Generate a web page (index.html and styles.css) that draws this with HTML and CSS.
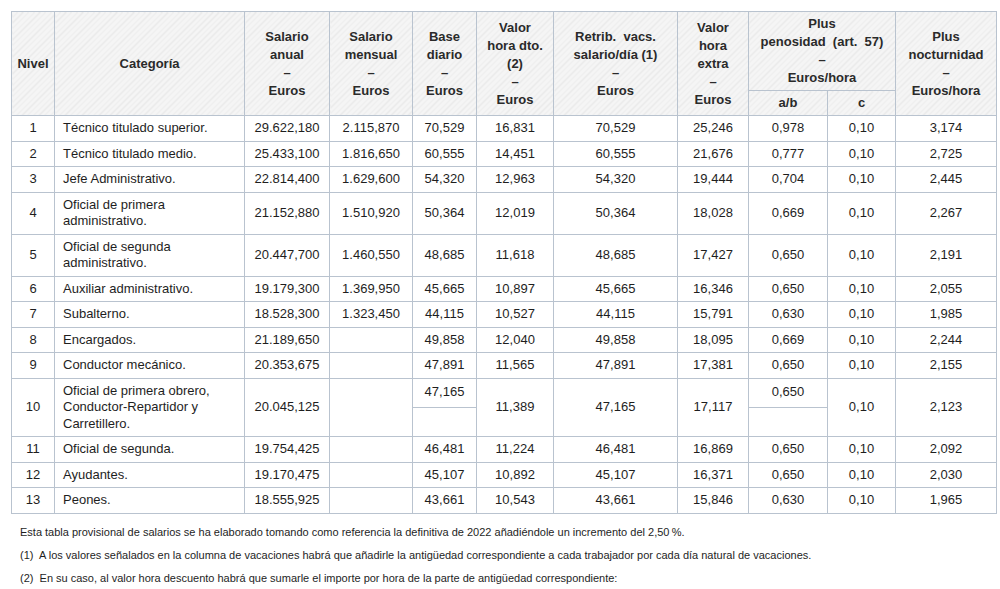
FILE: index.html
```html
<!DOCTYPE html>
<html lang="es">
<head>
<meta charset="utf-8">
<title>Tabla salarial</title>
<link rel="stylesheet" href="styles.css">
</head>
<body>
<div class="page">
<table class="salarios">
  <colgroup>
    <col class="c-nivel"><col class="c-cat"><col class="c-anual"><col class="c-mensual"><col class="c-base"><col class="c-dto"><col class="c-retrib"><col class="c-extra"><col class="c-ab"><col class="c-c"><col class="c-noct">
  </colgroup>
  <thead>
    <tr>
      <th rowspan="2">Nivel</th>
      <th rowspan="2">Categoría</th>
      <th rowspan="2">Salario<br>anual<br>–<br>Euros</th>
      <th rowspan="2">Salario<br>mensual<br>–<br>Euros</th>
      <th rowspan="2">Base<br>diario<br>–<br>Euros</th>
      <th rowspan="2">Valor<br>hora dto.<br>(2)<br>–<br>Euros</th>
      <th rowspan="2">Retrib.&nbsp; vacs.<br>salario/día (1)<br>–<br>Euros</th>
      <th rowspan="2">Valor<br>hora<br>extra<br>–<br>Euros</th>
      <th colspan="2">Plus<br>penosidad&nbsp; (art.&nbsp; 57)<br>–<br>Euros/hora</th>
      <th rowspan="2">Plus<br>nocturnidad<br>–<br>Euros/hora</th>
    </tr>
    <tr>
      <th>a/b</th>
      <th>c</th>
    </tr>
  </thead>
  <tbody>
    <tr><td>1</td><td class="cat">Técnico titulado superior.</td><td>29.622,180</td><td>2.115,870</td><td>70,529</td><td>16,831</td><td>70,529</td><td>25,246</td><td>0,978</td><td>0,10</td><td>3,174</td></tr>
    <tr><td>2</td><td class="cat">Técnico titulado medio.</td><td>25.433,100</td><td>1.816,650</td><td>60,555</td><td>14,451</td><td>60,555</td><td>21,676</td><td>0,777</td><td>0,10</td><td>2,725</td></tr>
    <tr><td>3</td><td class="cat">Jefe Administrativo.</td><td>22.814,400</td><td>1.629,600</td><td>54,320</td><td>12,963</td><td>54,320</td><td>19,444</td><td>0,704</td><td>0,10</td><td>2,445</td></tr>
    <tr><td>4</td><td class="cat">Oficial de primera<br>administrativo.</td><td>21.152,880</td><td>1.510,920</td><td>50,364</td><td>12,019</td><td>50,364</td><td>18,028</td><td>0,669</td><td>0,10</td><td>2,267</td></tr>
    <tr><td>5</td><td class="cat">Oficial de segunda<br>administrativo.</td><td>20.447,700</td><td>1.460,550</td><td>48,685</td><td>11,618</td><td>48,685</td><td>17,427</td><td>0,650</td><td>0,10</td><td>2,191</td></tr>
    <tr><td>6</td><td class="cat">Auxiliar administrativo.</td><td>19.179,300</td><td>1.369,950</td><td>45,665</td><td>10,897</td><td>45,665</td><td>16,346</td><td>0,650</td><td>0,10</td><td>2,055</td></tr>
    <tr><td>7</td><td class="cat">Subalterno.</td><td>18.528,300</td><td>1.323,450</td><td>44,115</td><td>10,527</td><td>44,115</td><td>15,791</td><td>0,630</td><td>0,10</td><td>1,985</td></tr>
    <tr><td>8</td><td class="cat">Encargados.</td><td>21.189,650</td><td></td><td>49,858</td><td>12,040</td><td>49,858</td><td>18,095</td><td>0,669</td><td>0,10</td><td>2,244</td></tr>
    <tr><td>9</td><td class="cat">Conductor mecánico.</td><td>20.353,675</td><td></td><td>47,891</td><td>11,565</td><td>47,891</td><td>17,381</td><td>0,650</td><td>0,10</td><td>2,155</td></tr>
    <tr class="split-a"><td rowspan="2">10</td><td rowspan="2" class="cat">Oficial de primera obrero,<br>Conductor-Repartidor y<br>Carretillero.</td><td rowspan="2">20.045,125</td><td rowspan="2"></td><td>47,165</td><td rowspan="2">11,389</td><td rowspan="2">47,165</td><td rowspan="2">17,117</td><td>0,650</td><td rowspan="2">0,10</td><td rowspan="2">2,123</td></tr>
    <tr class="split-b"><td></td><td></td></tr>
    <tr><td>11</td><td class="cat">Oficial de segunda.</td><td>19.754,425</td><td></td><td>46,481</td><td>11,224</td><td>46,481</td><td>16,869</td><td>0,650</td><td>0,10</td><td>2,092</td></tr>
    <tr><td>12</td><td class="cat">Ayudantes.</td><td>19.170,475</td><td></td><td>45,107</td><td>10,892</td><td>45,107</td><td>16,371</td><td>0,650</td><td>0,10</td><td>2,030</td></tr>
    <tr><td>13</td><td class="cat">Peones.</td><td>18.555,925</td><td></td><td>43,661</td><td>10,543</td><td>43,661</td><td>15,846</td><td>0,630</td><td>0,10</td><td>1,965</td></tr>
  </tbody>
</table>
<div class="notes">
  <p>Esta tabla provisional de salarios se ha elaborado tomando como referencia la definitiva de 2022 añadiéndole un incremento del 2,50&#8201;%.</p>
  <p>(1)&nbsp; A los valores señalados en la columna de vacaciones habrá que añadirle la antigüedad correspondiente a cada trabajador por cada día natural de vacaciones.</p>
  <p>(2)&nbsp; En su caso, al valor hora descuento habrá que sumarle el importe por hora de la parte de antigüedad correspondiente:</p>
</div>
</div>
</body>
</html>
```

FILE: styles.css
```css
html, body {
  margin: 0;
  padding: 0;
  background: #ffffff;
}

body {
  font-family: "Liberation Sans", Arial, sans-serif;
  color: #1e1e1e;
}

.page {
  padding: 11px 4px 0 11px;
}

.salarios {
  border-collapse: collapse;
  table-layout: fixed;
  width: 985px;
  font-size: 13px;
}

.c-nivel { width: 43px; }
.c-cat { width: 190px; }
.c-anual { width: 85px; }
.c-mensual { width: 83px; }
.c-base { width: 64px; }
.c-dto { width: 77px; }
.c-retrib { width: 124px; }
.c-extra { width: 71px; }
.c-ab { width: 79px; }
.c-c { width: 68px; }
.c-noct { width: 101px; }

.salarios th,
.salarios td {
  border: 1px solid #b9c3cf;
  text-align: center;
  vertical-align: middle;
}

.salarios th {
  font-weight: bold;
  color: #2a2a2a;
  line-height: 18px;
  padding: 3px 4px;
  background-color: #f4f4f4;
  background-image: repeating-linear-gradient(135deg, #f5f5f5 0px, #f5f5f5 3px, #e9e9e9 3px, #e9e9e9 4px);
}

.salarios td {
  line-height: 16.5px;
  padding: 4px 4px;
}

.salarios td.cat {
  text-align: left;
  padding-left: 8px;
}

.salarios tr.split-a {
  height: 29px;
}

.salarios tr.split-b {
  height: 29px;
}

.notes {
  padding: 7px 0 0 9px;
  font-size: 11px;
  color: #1e1e1e;
}

.notes p {
  margin: 0;
  line-height: 23px;
}
```
